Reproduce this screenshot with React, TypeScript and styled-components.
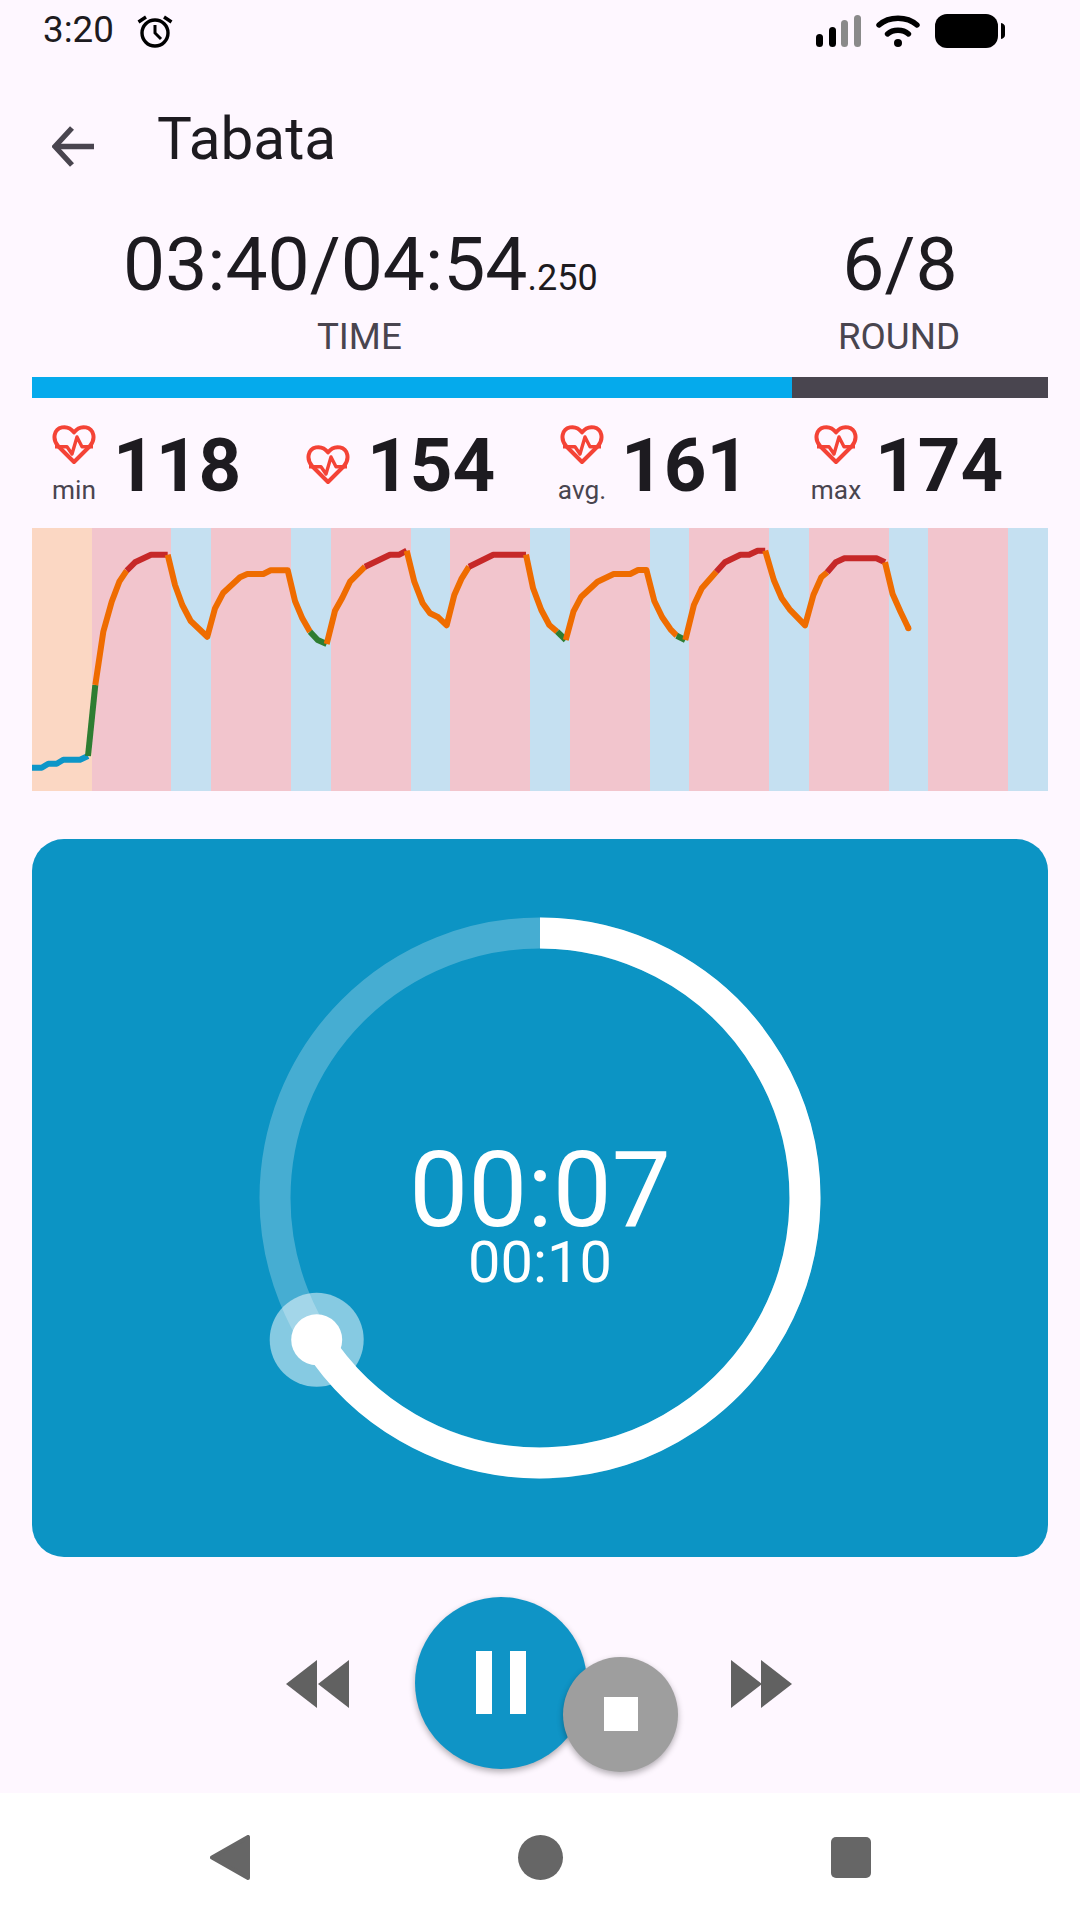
import styled, { createGlobalStyle } from 'styled-components';

const GlobalStyle = createGlobalStyle`
	html, body {
		margin: 0;
		padding: 0;
		background: #fef7ff;
	}
	* {
		box-sizing: border-box;
	}
`;

const Page = styled.div`
	width: 1080px;
	height: 1920px;
	overflow: hidden;
	display: flex;
	flex-direction: column;
	background: #fef7ff;
	color: #1d1b20;
	font-family: Roboto, 'Liberation Sans', sans-serif;
`;

const StatusBar = styled.div`
	height: 63px;
	display: flex;
	align-items: flex-start;
	padding: 10px 75px 0 43px;
	color: #000;
`;

const StatusTime = styled.span`
	font-size: 36.75px;
	line-height: 40px;
	color: #1d1b20;
`;

const AlarmIcon = styled.svg`
	width: 36px;
	height: 34px;
	margin: 5px 0 0 23px;
`;

const StatusIcons = styled.div`
	margin-left: auto;
	display: flex;
	gap: 15px;
	padding-top: 4px;
`;

const Header = styled.div`
	height: 105px;
	display: flex;
	align-items: flex-start;
	padding-left: 52px;
`;

const BackIcon = styled.svg`
	width: 44px;
	height: 44px;
	margin-top: 63px;
`;

const Title = styled.h1`
	margin: 43px 0 0 61px;
	font-size: 58.5px;
	line-height: 66px;
	font-weight: 400;
`;

const Content = styled.div`
	padding: 0 32px;
`;

const Stats = styled.div`
	display: flex;
	justify-content: space-between;
	padding: 54px 86px 0 91px;
`;

const Stat = styled.div`
	display: flex;
	flex-direction: column;
	align-items: center;
`;

const StatValue = styled.div`
	font-size: 75px;
	line-height: 84px;
	white-space: nowrap;
`;

const Millis = styled.span`
	font-size: 36px;
	line-height: 0;
`;

const StatLabel = styled.div`
	margin: 11px 2px 0 0;
	font-size: 36.75px;
	line-height: 40px;
	color: #49454f;
`;

const Progress = styled.div`
	margin-top: 20px;
	height: 21px;
	background: #49454f;
`;

const ProgressFill = styled.div`
	height: 100%;
	background: #05aaec;
`;

const HeartRow = styled.div`
	height: 130px;
	padding-top: 4px;
	display: grid;
	grid-template-columns: repeat(4, 1fr);
`;

const HeartCell = styled.div`
	display: flex;
	align-items: center;
	padding-left: 20px;
	gap: 14px;
`;

const HeartStack = styled.div`
	width: 50px;
	margin-left: -3px;
	display: flex;
	flex-direction: column;
	align-items: center;
`;

const HeartIcon = styled.svg`
	width: 44px;
	height: 40px;
`;

const HeartLabel = styled.span`
	margin-top: 10px;
	font-size: 26.25px;
	line-height: 30px;
	color: #49454f;
`;

const HeartValue = styled.span`
	margin-top: 2px;
	font-size: 74.5px;
	line-height: 84px;
	font-weight: 700;
`;

const Chart = styled.div`
	position: relative;
	height: 262.67px;
	display: flex;
`;

const Band = styled.div<{ $kind: 'warm' | 'work' | 'rest' }>`
	flex: ${p => (p.$kind === 'warm' ? 3 : p.$kind === 'work' ? 4 : 2)} 0 0;
	background: ${p => (p.$kind === 'warm' ? '#fbd7c3' : p.$kind === 'work' ? '#f2c5cd' : '#c5e0f1')};
`;

const ChartLine = styled.svg`
	position: absolute;
	left: 0;
	top: 0;
	width: 1016px;
	height: 263px;
`;

const TimerCard = styled.div`
	margin-top: 48.33px;
	height: 718px;
	border-radius: 32px;
	background: #0c94c4;
	display: flex;
	align-items: center;
	justify-content: center;
`;

const Ring = styled.div`
	position: relative;
	width: 600px;
	height: 600px;
`;

const RingSvg = styled.svg`
	display: block;
	width: 600px;
	height: 600px;
`;

const RingText = styled.div`
	position: absolute;
	inset: 0;
	padding-top: 36px;
	display: flex;
	flex-direction: column;
	align-items: center;
	justify-content: center;
	color: #fff;
`;

const Remaining = styled.div`
	font-size: 105px;
	line-height: 92px;
`;

const Total = styled.div`
	font-size: 57.75px;
	line-height: 50px;
`;

const Controls = styled.div`
	height: 236px;
	display: flex;
	align-items: flex-start;
	padding: 40px 0 0 286px;
`;

const SkipIcon = styled.svg`
	width: 63px;
	height: 48px;
	margin-top: 63px;
	flex: none;
`;

const PauseButton = styled.div`
	position: relative;
	flex: none;
	width: 172px;
	height: 172px;
	margin: 0 144px 0 66px;
	border-radius: 50%;
	background: #0f94c6;
	box-shadow: 0 3px 6px rgba(0, 0, 0, 0.3);
	display: flex;
	align-items: center;
	justify-content: center;
	gap: 18px;
`;

const PauseBar = styled.div`
	width: 16px;
	height: 63px;
	background: #fff;
`;

const StopButton = styled.div`
	position: absolute;
	left: 148px;
	top: 60px;
	width: 115px;
	height: 115px;
	border-radius: 50%;
	background: #9e9e9e;
	box-shadow: 0 3px 6px rgba(0, 0, 0, 0.3);
	display: flex;
	align-items: center;
	justify-content: center;
`;

const StopSquare = styled.div`
	width: 34px;
	height: 34px;
	background: #fff;
`;

const NavBar = styled.div`
	height: 127px;
	padding-top: 2px;
	background: #fff;
	display: flex;
	align-items: center;
	justify-content: center;
	gap: 268px;
`;

const NavBack = styled.svg`
	width: 40px;
	height: 45px;
`;

const NavHome = styled.div`
	width: 45px;
	height: 45px;
	border-radius: 50%;
	background: #666;
`;

const NavRecent = styled.div`
	width: 40px;
	height: 41px;
	border-radius: 5px;
	background: #666;
`;

const ORANGE = '#ef6c00';
const RED = '#c62828';
const GREEN = '#2e7d32';
const BLUE = '#0d96c8';

const SEGMENTS: [string, string][] = [
	[BLUE, '0,239.7 9.7,239.7 16.3,235.7 24.7,235.7 31.3,231.7 48,231.7 56,228'],
	[GREEN, '56,228 63.3,157'],
	[ORANGE, '63.3,157 71.3,103.7 79.7,73.7 87.3,53.7 94.7,42.7'],
	[RED, '94.7,42.7 103,34.3 119,26.7 135.7,26.7'],
	[ORANGE, '135.7,26.7 143,57 150.3,77 158.7,93 175.3,108.7 183,80.3 191.3,64.7 208,49.3 215.3,46 231.3,46 238.7,42.3 255.7,42.3 263,73 270.3,90.3 278,103.7'],
	[GREEN, '278,103.7 285.7,112 294.7,116'],
	[ORANGE, '294.7,116 303,82.7 310.3,69.7 318,53.7 333,38.7'],
	[RED, '333,38.7 358,26.7 367.3,26.7 374.7,22.7'],
	[ORANGE, '374.7,22.7 382.3,53.7 390.7,75.3 398,85.3 406.3,89.3 414.7,97.3 422.3,67 429.7,50.3 437,38.7'],
	[RED, '437,38.7 461.3,26.7 494,26.7'],
	[ORANGE, '494,26.7 501.1,60.3 509.3,82 517.3,97 525.2,103.7'],
	[GREEN, '525.2,103.7 533.8,112'],
	[ORANGE, '533.8,112 541.4,83.7 549.3,68.7 565.5,53.7 581.7,46 598.2,46 606.1,42 614.4,42 622.3,73 630.2,89.3 638.5,101.3 644.7,107.7'],
	[GREEN, '644.7,107.7 653.3,112'],
	[ORANGE, '653.3,112 661.9,77 669.8,60.3 684.3,43.7'],
	[RED, '684.3,43.7 692.9,34.3 708.4,26.7 717,26.7 725.6,22.7 733.2,22.7'],
	[ORANGE, '733.2,22.7 741.8,52 749.7,70.3 757.6,81.3 773.1,97.3 781.4,67 789.3,49.3 795.2,44.3'],
	[RED, '795.2,44.3 803.8,34.3 812.4,30.3 844.4,30.3 853,34.3'],
	[ORANGE, '853,34.3 860.6,66 868.5,83.7 876.4,100.3'],
];

const ROUNDS = 8;

const HEART_STATS = [
	{ value: 118, label: 'min' },
	{ value: 154, label: '' },
	{ value: 161, label: 'avg.' },
	{ value: 174, label: 'max' },
];

const Heart = () => (
	<HeartIcon viewBox="0 0 44 40" fill="none" stroke="#f44336" strokeWidth="4" strokeLinejoin="round">
		<path d="M22 37 L6 21 C0 14 2 4 10 2.4 C15 1.4 19 3.4 22 7.4 C25 3.4 29 1.4 34 2.4 C42 4 44 14 38 21 Z" />
		<path strokeWidth="3.4" d="M3 21.7 H15 L20 29 L25 12 L30 21.7 H41" />
	</HeartIcon>
);

const App = () => {
	return (
		<Page>
			<GlobalStyle />
			<StatusBar>
				<StatusTime>3:20</StatusTime>
				<AlarmIcon viewBox="0 0 36 34" fill="none" stroke="#000" strokeWidth="3.4">
					<circle cx="18" cy="18" r="13" />
					<path strokeWidth="3" d="M18 10 V18 L24 24" />
					<path d="M1.5 7 L9 2 M27 2 L34.5 7" />
				</AlarmIcon>
				<StatusIcons>
					<svg width="46" height="34" viewBox="0 0 46 34">
						<rect x="1" y="20" width="7" height="13" rx="3.5" fill="#000" />
						<rect x="14" y="13" width="7" height="20" rx="3.5" fill="#000" />
						<rect x="26" y="6" width="7" height="27" rx="3.5" fill="#8a8a8a" />
						<rect x="39" y="1" width="7" height="32" rx="3.5" fill="#8a8a8a" />
					</svg>
					<svg width="44" height="34" viewBox="0 0 44 34" fill="none" stroke="#000" strokeWidth="5.4" strokeLinecap="round">
						<path d="M3 11 C13 2 31 2 41 11" />
						<path d="M11.5 20 C17 15 27 15 32.5 20" />
						<circle cx="22" cy="29" r="4" fill="#000" stroke="none" />
					</svg>
					<svg width="70" height="34" viewBox="0 0 70 34">
						<rect x="0" y="0" width="63" height="34" rx="12" fill="#000" />
						<path d="M66 9 C68.5 9.5 70 11 70 13 V21 C70 23 68.5 24.5 66 25 Z" fill="#000" />
					</svg>
				</StatusIcons>
			</StatusBar>
			<Header>
				<BackIcon viewBox="0 0 44 44" fill="none" stroke="#49454f" strokeWidth="5.4">
					<path d="M20 2 L3 20.5 L20 39" />
					<path d="M3 20.5 H42" />
				</BackIcon>
				<Title>Tabata</Title>
			</Header>
			<Content>
				<Stats>
					<Stat>
						<StatValue>
							03:40/04:54<Millis>.250</Millis>
						</StatValue>
						<StatLabel>TIME</StatLabel>
					</Stat>
					<Stat>
						<StatValue>6/8</StatValue>
						<StatLabel>ROUND</StatLabel>
					</Stat>
				</Stats>
				<Progress>
					<ProgressFill style={{ width: `${((792 - 32) / 1016) * 100}%` }} />
				</Progress>
				<HeartRow>
					{HEART_STATS.map(stat => (
						<HeartCell key={stat.value}>
							<HeartStack>
								<Heart />
								{stat.label && <HeartLabel>{stat.label}</HeartLabel>}
							</HeartStack>
							<HeartValue>{stat.value}</HeartValue>
						</HeartCell>
					))}
				</HeartRow>
				<Chart>
					<Band $kind="warm" />
					{Array.from({ length: ROUNDS }).flatMap((_, i) => [
						<Band key={`work-${i}`} $kind="work" />,
						<Band key={`rest-${i}`} $kind="rest" />,
					])}
					<ChartLine viewBox="0 0 1016 263" fill="none" strokeWidth="6" strokeLinejoin="round">
						{SEGMENTS.map(([color, points]) => (
							<polyline key={points} points={points} stroke={color} />
						))}
						<circle cx="876.4" cy="100.3" r="3" fill={ORANGE} />
					</ChartLine>
				</Chart>
				<TimerCard>
					<Ring>
						<RingSvg viewBox="0 0 600 600" fill="none" strokeWidth="31">
							<circle cx="300" cy="300" r="265" stroke="#fff" strokeOpacity="0.24" />
							<path d="M300 35 A265 265 0 1 1 76.5 442.4" stroke="#fff" />
							<circle cx="76.7" cy="441.8" r="47" fill="#fff" fillOpacity="0.5" stroke="none" />
							<circle cx="76.7" cy="441.8" r="25.5" fill="#fff" stroke="none" />
						</RingSvg>
						<RingText>
							<Remaining>00:07</Remaining>
							<Total>00:10</Total>
						</RingText>
					</Ring>
				</TimerCard>
			</Content>
			<Controls>
				<SkipIcon viewBox="0 0 63 48" fill="#616161">
					<path d="M0 24 L31 0 V48 Z" />
					<path d="M32 24 L63 0 V48 Z" />
				</SkipIcon>
				<PauseButton>
					<PauseBar />
					<PauseBar />
					<StopButton>
						<StopSquare />
					</StopButton>
				</PauseButton>
				<SkipIcon viewBox="0 0 63 48" fill="#616161">
					<path d="M0 0 L31 24 L0 48 Z" />
					<path d="M30 0 L61 24 L30 48 Z" />
				</SkipIcon>
			</Controls>
			<NavBar>
				<NavBack viewBox="0 0 40 45" fill="#666" stroke="#666" strokeWidth="4" strokeLinejoin="round">
					<path d="M2 22.5 L38 2 V43 Z" />
				</NavBack>
				<NavHome />
				<NavRecent />
			</NavBar>
		</Page>
	);
};

export default App;
